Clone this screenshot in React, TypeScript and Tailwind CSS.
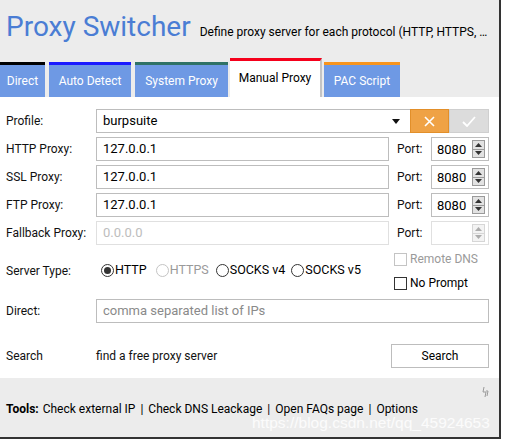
import React from "react";

const tabs = [
  { name: "Direct", w: "w-[45px]", border: "border-t-black", ml: "ml-0" },
  { name: "Auto Detect", w: "w-[82px]", border: "border-t-[#1a1aff]", ml: "ml-[4px]" },
  { name: "System Proxy", w: "w-[93px]", border: "border-t-[#2f7266]", ml: "ml-[4px]" },
];

const tools = ["Check external IP", "Check DNS Leackage", "Open FAQs page", "Options"];

function Spinner({ value, disabled }: { value?: string; disabled?: boolean }) {
  return (
    <div
      className={`w-[58px] h-[24px] border flex items-center justify-between pl-[5px] pr-[3px] ${
        disabled ? "border-[#e0e0e0]" : "border-[#bdbdbd]"
      }`}
    >
      <span className="text-[13px] text-black leading-none">{value ?? ""}</span>
      <div className={`flex flex-col w-[13px] h-[18px] ${disabled ? "opacity-40" : ""}`}>
        <div className="flex-1 bg-[#e2e2e2] border border-[#9a9a9a] flex items-center justify-center">
          <svg width="7" height="4" viewBox="0 0 7 4">
            <path d="M0 4 L3.5 0 L7 4 Z" fill="#333" />
          </svg>
        </div>
        <div className="flex-1 bg-[#e2e2e2] border border-t-0 border-[#9a9a9a] flex items-center justify-center">
          <svg width="7" height="4" viewBox="0 0 7 4">
            <path d="M0 0 L3.5 4 L7 0 Z" fill="#333" />
          </svg>
        </div>
      </div>
    </div>
  );
}

function ProxyRow({ label, value, disabled }: { label: string; value: string; disabled?: boolean }) {
  return (
    <div className="flex items-center h-[24px] mt-[4px]">
      <span className="w-[90px] text-[12px] text-[#111]">{label}</span>
      <div
        className={`w-[293px] h-[24px] border flex items-center px-[6px] text-[13px] ${
          disabled ? "border-[#e0e0e0] text-[#bdbdbd]" : "border-[#bdbdbd] text-black"
        }`}
      >
        {value}
      </div>
      <span className="ml-[8px] w-[34px] text-[12px] text-[#111]">Port:</span>
      <Spinner value={disabled ? undefined : "8080"} disabled={disabled} />
    </div>
  );
}

function Radio({ label, checked, disabled, ml }: { label: string; checked?: boolean; disabled?: boolean; ml: string }) {
  return (
    <div className={`flex items-center ${ml}`}>
      <div
        className={`w-[13px] h-[13px] rounded-full border flex items-center justify-center ${
          disabled ? "border-[#c4c4c4]" : "border-[#333]"
        }`}
      >
        {checked && <div className="w-[7px] h-[7px] rounded-full bg-[#333]" />}
      </div>
      <span className={`ml-[1px] text-[12.5px] ${disabled ? "text-[#9a9a9a]" : "text-black"}`}>{label}</span>
    </div>
  );
}

export default function App() {
  return (
    <div className="w-[505px] h-[440px] bg-white overflow-hidden font-['Roboto',sans-serif] relative">
      <div className="w-[501px] h-[439px] bg-[#ececec] border-r-[2px] border-b-[2px] border-[#333] flex flex-col">
        {/* header */}
        <div className="h-[58px] flex items-start pl-[6px] pt-[10px]">
          <h1 className="text-[28px] leading-[34px] text-[#4a7dd4]">Proxy Switcher</h1>
          <p className="ml-[9px] mt-[13px] text-[12px] text-black whitespace-nowrap">
            Define proxy server for each protocol (HTTP, HTTPS, …
          </p>
        </div>

        {/* tabs */}
        <div className="h-[39px] flex items-end">
          {tabs.map((t) => (
            <div
              key={t.name}
              className={`${t.w} ${t.ml} h-[35px] border-t-[3px] ${t.border} bg-[#6e99e4] text-white text-[12px] flex items-center justify-center`}
            >
              {t.name}
            </div>
          ))}
          <div className="ml-[2px] w-[92px] h-[39px] border-t-[3px] border-t-[#f5001b] bg-white text-black text-[12px] flex justify-center pt-[8px] border-r-[2px] border-r-[#c4c4c4]">
            Manual Proxy
          </div>
          <div className="ml-[2px] w-[76px] h-[35px] border-t-[3px] border-t-[#f7941d] bg-[#6e99e4] text-white text-[12px] flex items-center justify-center">
            PAC Script
          </div>
        </div>

        {/* main */}
        <div className="h-[281px] bg-white pl-[6px] pt-[12px] flex flex-col">
          <div className="flex items-center h-[24px]">
            <span className="w-[90px] text-[12px] text-[#111]">Profile:</span>
            <div className="w-[314px] h-[24px] border border-[#bdbdbd] border-r-0 flex items-center justify-between pl-[6px] pr-[10px] text-[13px] text-black">
              burpsuite
              <svg width="8" height="5" viewBox="0 0 8 5">
                <path d="M0 0 L8 0 L4 5 Z" fill="#111" />
              </svg>
            </div>
            <div className="w-[39px] h-[24px] bg-[#efa245] border border-[#e28f2a] flex items-center justify-center">
              <svg width="11" height="11" viewBox="0 0 11 11">
                <path d="M1 1 L10 10 M10 1 L1 10" stroke="white" strokeWidth="1.6" />
              </svg>
            </div>
            <div className="w-[40px] h-[24px] bg-[#dcdcdc] border border-[#cfcfcf] flex items-center justify-center">
              <svg width="14" height="11" viewBox="0 0 14 11">
                <path d="M1 6 L5 10 L13 1" stroke="white" strokeWidth="1.8" fill="none" />
              </svg>
            </div>
          </div>

          <ProxyRow label="HTTP Proxy:" value="127.0.0.1" />
          <ProxyRow label="SSL Proxy:" value="127.0.0.1" />
          <ProxyRow label="FTP Proxy:" value="127.0.0.1" />
          <ProxyRow label="Fallback Proxy:" value="0.0.0.0" disabled />

          <div className="flex items-center mt-[7px] h-[37px]">
            <span className="w-[95px] text-[12px] text-[#111]">Server Type:</span>
            <Radio label="HTTP" checked ml="ml-0" />
            <Radio label="HTTPS" disabled ml="ml-[9px]" />
            <Radio label="SOCKS v4" ml="ml-[7px]" />
            <Radio label="SOCKS v5" ml="ml-[6px]" />
            <div className="ml-auto mr-[21px] mt-[1px] flex flex-col gap-[11px]">
              <div className="flex items-center h-[13px]">
                <div className="w-[13px] h-[13px] border border-[#c4c4c4]" />
                <span className="ml-[3px] text-[12px] leading-none text-[#9a9a9a]">Remote DNS</span>
              </div>
              <div className="flex items-center h-[13px]">
                <div className="w-[13px] h-[13px] border border-[#333]" />
                <span className="ml-[3px] text-[12px] leading-none text-black">No Prompt</span>
              </div>
            </div>
          </div>

          <div className="flex items-center mt-[10px] h-[24px]">
            <span className="w-[90px] text-[12px] text-[#111]">Direct:</span>
            <div className="w-[393px] h-[24px] border border-[#bdbdbd] flex items-center px-[6px] text-[13px] text-[#8a8a8a]">
              comma separated list of IPs
            </div>
          </div>

          <div className="flex items-center mt-[21px] h-[24px]">
            <span className="w-[90px] text-[12px] text-[#111]">Search</span>
            <span className="text-[12px] text-[#111]">find a free proxy server</span>
            <div className="ml-auto mr-[10px] w-[98px] h-[24px] border border-[#bdbdbd] flex items-center justify-center text-[12px] text-black">
              Search
            </div>
          </div>
        </div>

        {/* footer */}
        <div className="flex-1 relative pl-[6px] pt-[22px]">
          <svg className="absolute right-[10px] top-[9px]" width="7" height="10" viewBox="0 0 7 10">
            <path d="M2 0 L1 5 L4 5 L3 10 M4 4 L6 4 L5 9" stroke="#9a9a9a" strokeWidth="1" fill="none" />
          </svg>
          <p className="flex items-center text-[12px] text-black">
            <b className="mr-[4px]">Tools:</b>
            {tools.map((t, i) => (
              <React.Fragment key={t}>
                {i > 0 && <span className="mx-[5px]">|</span>}
                <span>{t}</span>
              </React.Fragment>
            ))}
          </p>
        </div>
      </div>
      <span className="absolute left-[252px] top-[411px] text-[15.5px] text-white/80 font-['Liberation_Sans',sans-serif] pointer-events-none">
        https://blog.csdn.net/qq_45924653
      </span>
    </div>
  );
}
